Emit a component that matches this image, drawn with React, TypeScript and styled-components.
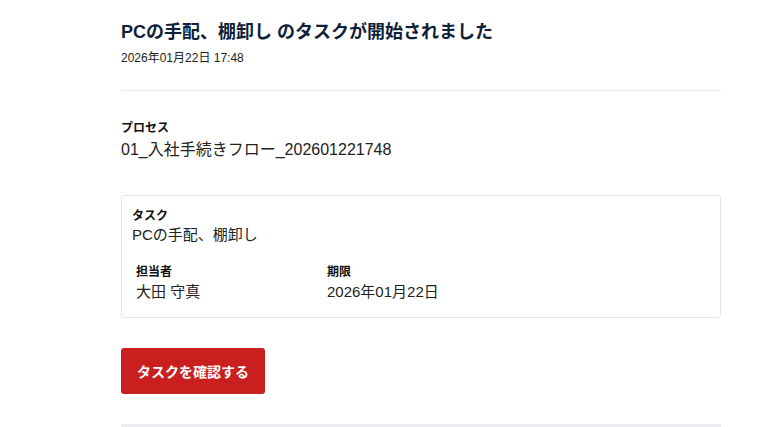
import React from "react";
import styled, { createGlobalStyle } from "styled-components";

const GlobalStyle = createGlobalStyle`
  html, body {
    margin: 0;
    padding: 0;
    background: #ffffff;
  }
  body {
    font-family: "Liberation Sans", Arial, "Noto Sans CJK JP", sans-serif;
    color: #222222;
  }
`;

const Page = styled.main`
  width: 600px;
  margin-left: 121px;
  padding-top: 20px;
  display: flex;
  flex-direction: column;
`;

const Header = styled.header`
  display: flex;
  flex-direction: column;
  gap: 6px;
  padding-bottom: 24px;
  border-bottom: 1px solid #e8e8ee;
`;

const Title = styled.h1`
  margin: 0;
  font-size: 18px;
  line-height: 24px;
  font-weight: 700;
  color: #0f1f3a;
`;

const Timestamp = styled.div`
  font-size: 12px;
  line-height: 16px;
  color: #222222;
`;

const Field = styled.div<{ $gap?: number }>`
  display: flex;
  flex-direction: column;
  gap: ${(p) => p.$gap ?? 3}px;
`;

const Label = styled.div<{ $lh?: number }>`
  font-size: 12px;
  line-height: ${(p) => p.$lh ?? 16}px;
  font-weight: 700;
  color: #111111;
`;

const Value = styled.div<{ $size?: number; $lh?: number }>`
  font-size: ${(p) => p.$size ?? 15}px;
  line-height: ${(p) => p.$lh ?? 16}px;
  color: #222222;
`;

const ProcessSection = styled.section`
  margin-top: 29px;
`;

const Card = styled.section`
  margin-top: 34px;
  border: 1px solid #e6e6ea;
  border-radius: 3px;
  padding: 13px 10px 17px;
  display: flex;
  flex-direction: column;
  gap: 22px;
`;

const MetaGrid = styled.div`
  display: grid;
  grid-template-columns: 191px 1fr;
  padding: 0 4px;
`;

const ButtonRow = styled.div`
  margin-top: 30px;
  display: flex;
`;

const PrimaryButton = styled.a`
  display: inline-flex;
  align-items: center;
  justify-content: center;
  height: 46px;
  padding: 0 16px;
  background: #c91f1f;
  color: #ffffff;
  font-size: 14px;
  font-weight: 700;
  border-radius: 3px;
  text-decoration: none;
  cursor: pointer;
`;

const FooterBar = styled.div`
  margin-top: 30px;
  height: 20px;
  background: #ebebf0;
`;

export default function App() {
  return (
    <>
      <GlobalStyle />
      <Page>
        <Header>
          <Title>PCの手配、棚卸し のタスクが開始されました</Title>
          <Timestamp>2026年01月22日 17:48</Timestamp>
        </Header>

        <ProcessSection>
          <Field>
            <Label>プロセス</Label>
            <Value $size={16} $lh={22}>
              01_入社手続きフロー_202601221748
            </Value>
          </Field>
        </ProcessSection>

        <Card>
          <Field $gap={4}>
            <Label $lh={14}>タスク</Label>
            <Value>PCの手配、棚卸し</Value>
          </Field>
          <MetaGrid>
            <Field $gap={5}>
              <Label $lh={14}>担当者</Label>
              <Value>大田 守真</Value>
            </Field>
            <Field $gap={5}>
              <Label $lh={14}>期限</Label>
              <Value>2026年01月22日</Value>
            </Field>
          </MetaGrid>
        </Card>

        <ButtonRow>
          <PrimaryButton>タスクを確認する</PrimaryButton>
        </ButtonRow>

        <FooterBar />
      </Page>
    </>
  );
}
